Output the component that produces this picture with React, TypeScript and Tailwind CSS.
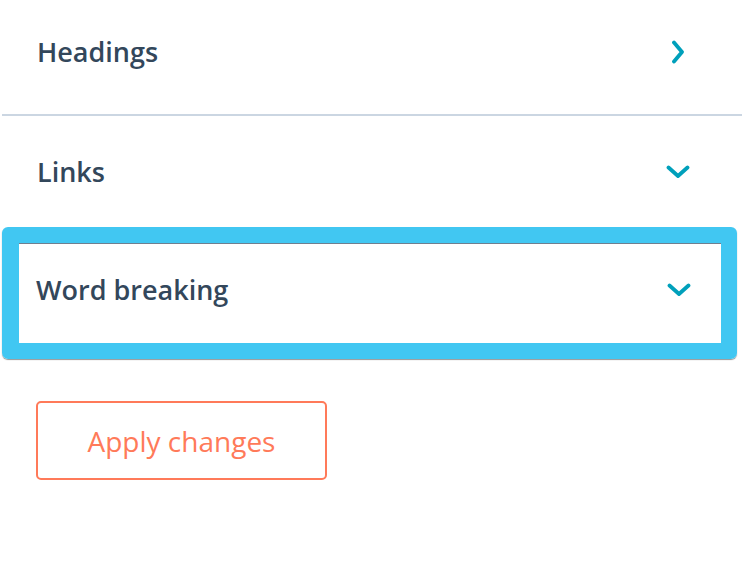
import React from "react";

const Chevron = ({ dir }: { dir: "right" | "down" }) => (
  <svg width="24" height="24" viewBox="0 0 24 24" fill="none" className="shrink-0">
    {dir === "right" ? (
      <path d="M8 2.5 L16 12 L8 21.5" stroke="#00a0bb" strokeWidth="3.8" strokeLinecap="round" strokeLinejoin="round" />
    ) : (
      <path d="M2.5 7.5 L12 16 L21.5 7.5" stroke="#00a0bb" strokeWidth="3.8" strokeLinecap="round" strokeLinejoin="round" />
    )}
  </svg>
);

export default function App() {
  return (
    <div className="w-[742px] h-[566px] bg-white overflow-hidden font-['Open_Sans','Liberation_Sans',sans-serif] text-[#33475b]">
      {/* Headings row */}
      <div className="flex items-center justify-between pl-[37px] pr-[52px] pt-[36px] pb-[46px]">
        <span className="text-[27px] leading-[32px] font-semibold">Headings</span>
        <Chevron dir="right" />
      </div>
      <div className="ml-[2px] h-[2px] bg-[#cbd6e2]" />

      {/* Links row */}
      <div className="flex items-center justify-between pl-[37px] pr-[52px] pt-[40px] pb-[39px]">
        <span className="text-[27px] leading-[32px] font-semibold">Links</span>
        <Chevron dir="down" />
      </div>

      {/* Focused: Word breaking */}
      <div className="ml-[2px] mr-[5px] rounded-[6px] border-[16px] border-l-[17px] border-[#41c7f2] shadow-[0_1px_1px_rgba(80,80,80,0.6)]">
        <div className="flex items-center justify-between bg-white border-t border-[#6f7f8f] pl-[17px] pr-[30px] pt-[30px] pb-[37px]">
          <span className="text-[27px] leading-[32px] font-semibold">Word breaking</span>
          <Chevron dir="down" />
        </div>
      </div>

      <div className="pl-[36px] pt-[42px]">
        <button className="w-[291px] h-[79px] rounded-[5px] border-2 border-[#ff7a59] bg-white text-[#ff7a59] text-[28px] font-medium leading-[32px]">
          Apply changes
        </button>
      </div>
    </div>
  );
}
